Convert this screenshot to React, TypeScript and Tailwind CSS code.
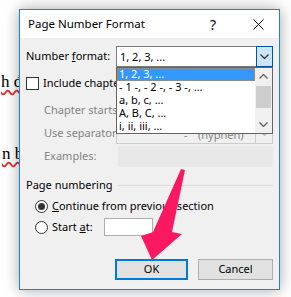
import React from "react";

const listItems = ["1, 2, 3, ...", "- 1 -, - 2 -, - 3 -, ...", "a, b, c, ...", "A, B, C, ...", "i, ii, iii, ..."];

function Chevron({ className = "" }: { className?: string }) {
  return (
    <svg width="9" height="5" viewBox="0 0 9 5" className={className}>
      <path d="M0.5 0.5 L4.5 4.5 L8.5 0.5" fill="none" stroke="currentColor" strokeWidth="1.3" />
    </svg>
  );
}

function Radio({ checked }: { checked?: boolean }) {
  return (
    <span className="w-[13px] h-[13px] rounded-full border border-[#333] bg-white flex items-center justify-center shrink-0">
      {checked && <span className="w-[7px] h-[7px] rounded-full bg-[#333]" />}
    </span>
  );
}

export default function App() {
  return (
    <div
      className="relative w-[291px] h-[297px] bg-white overflow-hidden text-[11px] text-black"
      style={{ fontFamily: '"Noto Sans", sans-serif' }}
    >
      {/* document text behind the dialog */}
      <div className="absolute left-[1px] top-[73px] text-[17px] leading-none" style={{ fontFamily: '"Liberation Serif", serif' }}>
        <span className="underline decoration-wavy decoration-[#e22] underline-offset-2">h đ</span>
      </div>
      <div className="absolute left-[2px] top-[145px] text-[17px] leading-none" style={{ fontFamily: '"Liberation Serif", serif' }}>
        <span className="underline decoration-wavy decoration-[#e22] underline-offset-2">n b</span>
      </div>

      {/* dialog */}
      <div className="relative ml-[19px] mt-[9px] w-[261px] border border-[#1883d7] bg-[#f0f0f0] shadow-[0_0_14px_rgba(0,0,0,0.35)]">
        <div className="h-[28px] bg-white flex items-center pl-[8px] pr-[15px]">
          <span className="flex-1 text-[11.5px]">Page Number Format</span>
          <span className="text-[14px] mr-[37px]">?</span>
          <svg width="11" height="11" viewBox="0 0 11 11">
            <path d="M0.5 0.5 L10.5 10.5 M10.5 0.5 L0.5 10.5" stroke="#000" strokeWidth="1" />
          </svg>
        </div>

        <div className="px-[6px] pb-[9px] flex flex-col">
          <div className="mt-[8px] h-[21px] flex items-center">
            <span className="w-[90px] whitespace-nowrap">
              Number <span className="underline">f</span>ormat:
            </span>
            <div className="relative flex-1 h-full z-10">
              <div className="h-full flex border border-[#7a7a7a] bg-white">
                <span className="flex-1 pl-[3px] leading-[19px]">1, 2, 3, ...</span>
                <span className="w-[17px] -my-px -mr-px border border-[#005499] bg-[#cce4f7] flex items-center justify-center text-[#333]">
                  <Chevron />
                </span>
              </div>
              <div className="absolute left-0 right-0 top-full h-[67px] border border-[#646464] bg-white flex">
                <div className="flex-1 flex flex-col">
                  {listItems.map((t, i) => (
                    <div
                      key={t}
                      className={
                        i === 0
                          ? "h-[13px] leading-[12px] pl-[2px] bg-[#3399ff] text-white outline-1 outline-dotted outline-[#d7882f] -outline-offset-1"
                          : "h-[13px] leading-[12px] pl-[2px]"
                      }
                    >
                      {t}
                    </div>
                  ))}
                </div>
                <div className="w-[17px] bg-[#f0f0f0] flex flex-col items-center text-[#606060]">
                  <Chevron className="mt-[6px] rotate-180" />
                  <div className="mt-[7px] w-[15px] h-[22px] bg-[#cdcdcd]" />
                  <Chevron className="mt-auto mb-[6px]" />
                </div>
              </div>
            </div>
          </div>

          <div className="mt-[10px] h-[13px] flex items-center">
            <span className="w-[13px] h-[13px] border border-[#333] bg-white shrink-0" />
            <span className="ml-[4px] w-[73px] overflow-hidden whitespace-nowrap">Include chapter number</span>
          </div>

          <div className="mt-[10px] h-[21px] flex items-center text-[#838383]">
            <span className="ml-[18px] w-[72px] overflow-hidden whitespace-nowrap">Chapter starts with style:</span>
            <div className="flex-1 h-full border border-[#cccccc] bg-[#f0f0f0]" />
          </div>

          <div className="mt-[2px] h-[21px] flex items-center text-[#838383]">
            <span className="ml-[18px] w-[72px] whitespace-nowrap">Use separator:</span>
            <div className="flex-1 h-full flex border border-[#cccccc] bg-[#f0f0f0]">
              <span className="ml-[67px] w-[14px] leading-[21px]">-</span>
              <span className="flex-1 leading-[21px]">(hyphen)</span>
              <span className="w-[17px] border-l border-[#cccccc] flex items-center justify-center text-[#bbbbbb]">
                <Chevron />
              </span>
            </div>
          </div>

          <div className="mt-[2px] h-[21px] flex items-center text-[#838383]">
            <span className="ml-[18px] w-[74px]">Examples:</span>
            <div className="flex-1 h-full bg-[#e8e8e8]" />
          </div>

          <div className="mt-[11px] h-[14px] flex items-center">
            <span>Page numbering</span>
            <div className="ml-[6px] flex-1 h-px bg-[#dcdcdc]" />
          </div>

          <div className="mt-[7px] h-[14px] flex items-center pl-[9px]">
            <Radio checked />
            <span className="ml-[4px]">
              <span className="underline">C</span>ontinue from previous section
            </span>
          </div>

          <div className="mt-[5px] h-[18px] flex items-center pl-[9px]">
            <Radio />
            <span className="ml-[4px] w-[52px]">
              Start <span className="underline">a</span>t:
            </span>
            <div className="w-[49px] h-[18px] border border-[#adadad] bg-white" />
          </div>

          <div className="mt-[23px] flex justify-end gap-[10px]">
            <button className="w-[73px] h-[21px] border-2 border-[#0078d7] bg-[#e1e1e1] flex items-center justify-center">OK</button>
            <button className="w-[75px] h-[21px] border border-[#adadad] bg-[#e1e1e1] flex items-center justify-center">Cancel</button>
          </div>
        </div>
      </div>

      {/* pink pointer arrow */}
      <svg className="absolute left-0 top-0" width="291" height="297" viewBox="0 0 291 297">
        <polygon points="181,169 185,170 172,232 182,234 152,260 141,236 153,232" fill="#fa1960" />
      </svg>
    </div>
  );
}
